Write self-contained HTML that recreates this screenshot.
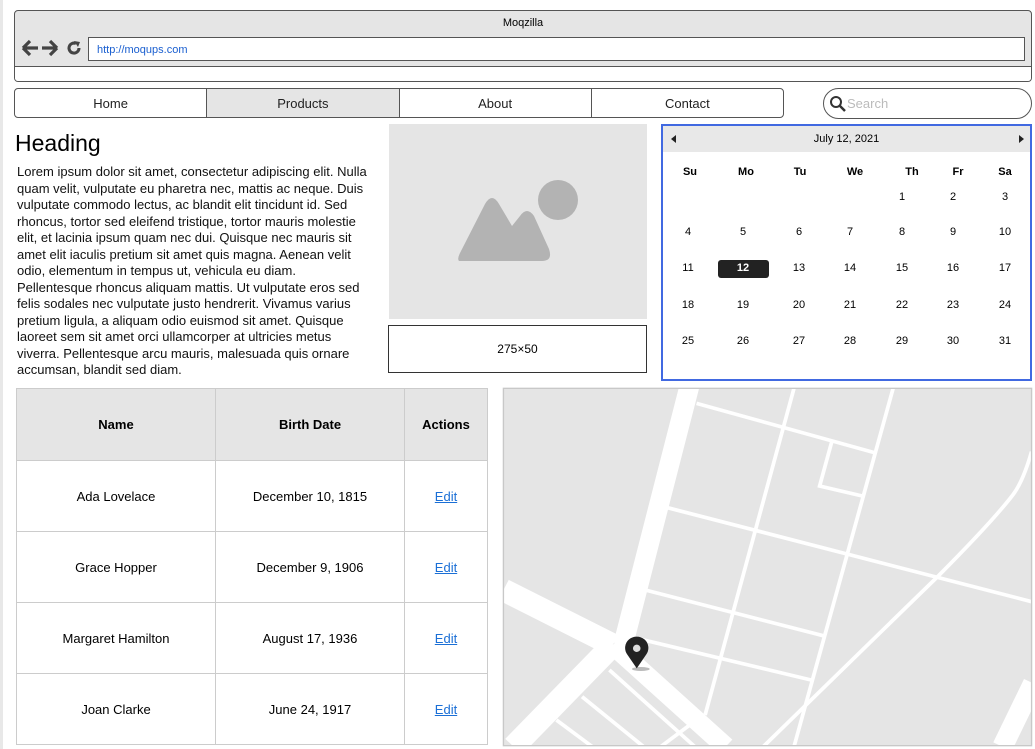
<!DOCTYPE html>
<html><head><meta charset="utf-8"><style>
*{box-sizing:border-box;margin:0;padding:0}
body{width:1035px;height:749px;overflow:hidden;background:#fff;font-family:"Liberation Sans",Arial,sans-serif;position:relative;color:#000}
.a{position:absolute}
.lb{position:absolute;left:0;top:0;width:3px;height:749px;background:#e8e8e8}
.br{left:14px;top:10px;width:1018px;height:72px;border:1px solid #555;border-radius:4px;background:#e5e5e5;overflow:hidden}
.nav{left:14px;top:88px;width:770px;height:30px;border:1px solid #555;border-radius:4px;display:flex;overflow:hidden}
.nav div{flex:1;text-align:center;line-height:29px;font-size:13px;color:#222;border-right:1px solid #555}
.nav div:last-child{border-right:none}
.cr span{position:absolute;width:40px;margin-left:-20px;text-align:center;font-size:11px}
table.t{border-collapse:collapse;font-size:13px}
table.t td{border:1px solid #ccc;text-align:center;height:71px}
</style></head><body>
<div class="lb"></div>
<div class="a br">
 <div class="a" style="left:0;top:6px;width:100%;text-align:center;font-size:11px">Moqzilla</div>
 <svg class="a" style="left:6px;top:28px" width="60" height="18" viewBox="0 0 60 18">
  <path d="M2 9 L9 2 M2 9 L9 16 M2 9 H17" stroke="#444" stroke-width="3.2" fill="none"/>
  <path d="M36 9 L29 2 M36 9 L29 16 M36 9 H21" stroke="#444" stroke-width="3.2" fill="none"/>
  <path d="M58 9 A5 5 0 1 1 55 4.5" stroke="#444" stroke-width="3" fill="none"/><path d="M53 2 L59 3 L57 8 Z" fill="#444"/>
 </svg>
 <div class="a" style="left:73px;top:26px;width:937px;height:24px;background:#fff;border:1px solid #555;font-size:11px;color:#1a5fd0;padding:6px 8px">http://moqups.com</div>
 <div class="a" style="left:0;top:55px;width:100%;height:17px;background:#fff;border-top:1px solid #555"></div>
</div>
<div class="a nav"><div>Home</div><div style="background:#e5e5e5">Products</div><div>About</div><div>Contact</div></div>
<div class="a" style="left:823px;top:88px;width:209px;height:31px;border:1px solid #555;border-radius:16px">
 <svg class="a" style="left:5px;top:6px" width="18" height="18" viewBox="0 0 18 18"><circle cx="7" cy="7" r="5" stroke="#333" stroke-width="2" fill="none"/><path d="M10.5 10.5 L16 16" stroke="#333" stroke-width="2.5"/></svg>
 <div class="a" style="left:23px;top:7px;font-size:13px;color:#bbb">Search</div>
</div>
<div class="a" style="left:15px;top:130px;font-size:23px">Heading</div>
<div class="a" style="left:17px;top:164px;width:350px;font-size:13px;line-height:16.5px;color:#111">Lorem ipsum dolor sit amet, consectetur adipiscing elit. Nulla quam velit, vulputate eu pharetra nec, mattis ac neque. Duis vulputate commodo lectus, ac blandit elit tincidunt id. Sed rhoncus, tortor sed eleifend tristique, tortor mauris molestie elit, et lacinia ipsum quam nec dui. Quisque nec mauris sit amet elit iaculis pretium sit amet quis magna. Aenean velit odio, elementum in tempus ut, vehicula eu diam. Pellentesque rhoncus aliquam mattis. Ut vulputate eros sed felis sodales nec vulputate justo hendrerit. Vivamus varius pretium ligula, a aliquam odio euismod sit amet. Quisque laoreet sem sit amet orci ullamcorper at ultricies metus viverra. Pellentesque arcu mauris, malesuada quis ornare accumsan, blandit sed diam.</div>
<div class="a" style="left:389px;top:124px;width:258px;height:195px;background:#e5e5e5">
 <svg class="a" style="left:68px;top:55px" width="125" height="85" viewBox="0 0 125 85">
  <circle cx="101" cy="21" r="20" fill="#b3b3b3"/>
  <path d="M2 82 Q0 80 3 74 L28 25 Q35 13 42 25 L55 47 L63 37 Q70 27 77 37 L92 70 Q96 82 85 82 Z" fill="#b3b3b3"/>
 </svg>
</div>
<div class="a" style="left:388px;top:325px;width:259px;height:48px;border:1px solid #333;text-align:center;line-height:46px;font-size:12px">275×50</div>
<div class="a" style="left:661px;top:124px;width:371px;height:257px;border:2px solid #4169e1">
 <div style="height:26px;background:#e8e8e8;font-size:11px;text-align:center;line-height:27px;position:relative">July 12, 2021
  <span class="a" style="left:8px;top:9px;border:4px solid transparent;border-right:5px solid #222;border-left:0"></span>
  <span class="a" style="right:6px;top:9px;border:4px solid transparent;border-left:5px solid #222;border-right:0"></span>
 </div>
 <div class="a cr" style="left:0;top:40px;width:100%;font-weight:bold"><span style="left:27px">Su</span><span style="left:83px">Mo</span><span style="left:137px">Tu</span><span style="left:192px">We</span><span style="left:249px">Th</span><span style="left:295px">Fr</span><span style="left:342px">Sa</span></div>
 <div class="a cr" style="left:0;top:65px;width:100%"><span style="left:239px">1</span><span style="left:290px">2</span><span style="left:342px">3</span></div>
 <div class="a cr" style="left:0;top:100px;width:100%"><span style="left:25px">4</span><span style="left:80px">5</span><span style="left:136px">6</span><span style="left:187px">7</span><span style="left:239px">8</span><span style="left:290px">9</span><span style="left:342px">10</span></div>
 <div class="a" style="left:55px;top:134px;width:51px;height:18px;background:#222;border-radius:3px"></div>
 <div class="a cr" style="left:0;top:136px;width:100%"><span style="left:25px">11</span><span style="left:80px;color:#fff;font-weight:bold">12</span><span style="left:136px">13</span><span style="left:187px">14</span><span style="left:239px">15</span><span style="left:290px">16</span><span style="left:342px">17</span></div>
 <div class="a cr" style="left:0;top:173px;width:100%"><span style="left:25px">18</span><span style="left:80px">19</span><span style="left:136px">20</span><span style="left:187px">21</span><span style="left:239px">22</span><span style="left:290px">23</span><span style="left:342px">24</span></div>
 <div class="a cr" style="left:0;top:209px;width:100%"><span style="left:25px">25</span><span style="left:80px">26</span><span style="left:136px">27</span><span style="left:187px">28</span><span style="left:239px">29</span><span style="left:290px">30</span><span style="left:342px">31</span></div>
</div>
<table class="t a" style="left:16px;top:388px;width:472px">
 <tr style="background:#e5e5e5;font-weight:bold"><td style="width:199px;height:72px">Name</td><td style="width:189px">Birth Date</td><td>Actions</td></tr>
 <tr><td>Ada Lovelace</td><td>December 10, 1815</td><td><u style="color:#1a6fd6">Edit</u></td></tr>
 <tr><td>Grace Hopper</td><td>December 9, 1906</td><td><u style="color:#1a6fd6">Edit</u></td></tr>
 <tr><td>Margaret Hamilton</td><td>August 17, 1936</td><td><u style="color:#1a6fd6">Edit</u></td></tr>
 <tr><td>Joan Clarke</td><td>June 24, 1917</td><td><u style="color:#1a6fd6">Edit</u></td></tr>
</table>
<svg class="a" style="left:500px;top:385px" width="535" height="364" viewBox="0 0 1565 1092" preserveAspectRatio="none">
 <rect x="10" y="10" width="1545" height="1072" fill="#e5e5e5"/>
 <g stroke="#fff" fill="none" stroke-linecap="butt">
  <path d="M555 0 L360 780" stroke-width="58"/>
  <path d="M10 615 L330 780" stroke-width="68"/>
  <path d="M330 780 L660 1085" stroke-width="58"/>
  <path d="M330 780 L40 1085" stroke-width="68"/>
  <g stroke-width="11">
   <path d="M575 55 L1095 203"/>
   <path d="M860 10 L600 990"/>
   <path d="M1150 10 L860 1085"/>
   <path d="M970 172 L935 303 L1060 333"/>
   <path d="M490 368 L1555 650"/>
   <path d="M425 615 L945 752"/>
   <path d="M400 760 L910 885"/>
   <path d="M1555 200 Q1530 290 1500 330 Q1440 410 1280 575 L770 1085"/>
   <path d="M320 855 L570 1085"/>
   <path d="M240 935 L420 1085"/>
   <path d="M165 1005 L270 1085"/>
   <path d="M555 1020 L470 1085"/>
  </g>
  <path d="M1560 895 L1470 1085" stroke-width="60"/>
 </g>
 <rect x="10" y="10" width="1545" height="1072" fill="none" stroke="#c8c8c8" stroke-width="4"/>
 <ellipse cx="412" cy="852" rx="26" ry="6" fill="#bbb"/>
 <path d="M400 850 L372 808 A34 34 0 1 1 428 808 Z" fill="#222"/>
 <circle cx="400" cy="790" r="11" fill="#ddd"/>
</svg>
</body></html>
